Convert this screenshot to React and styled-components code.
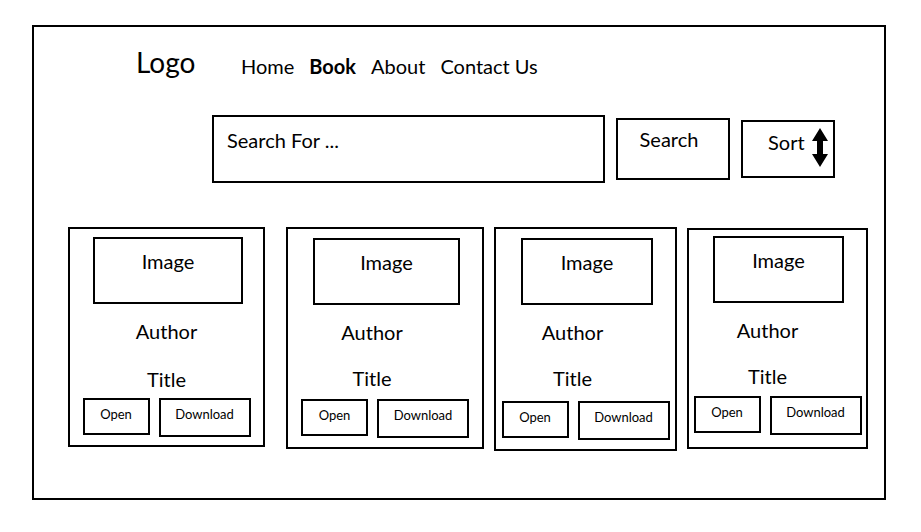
import React from "react";
import styled, { createGlobalStyle } from "styled-components";

const GlobalStyle = createGlobalStyle`
  body {
    margin: 0;
    background: #ffffff;
    color: #000000;
    font-family: "Lato", "Open Sans", sans-serif;
  }
`;

const Frame = styled.div`
  box-sizing: border-box;
  width: 854px;
  height: 475px;
  margin: 25px 0 0 32px;
  border: 2px solid #000;
  display: flex;
  flex-direction: column;
`;

const Header = styled.header`
  display: flex;
  align-items: flex-start;
  padding: 18px 0 0 102px;
`;

const Logo = styled.div`
  width: 105px;
  font-size: 28px;
  line-height: 34px;
`;

const Nav = styled.nav`
  display: flex;
  gap: 15px;
  margin-top: 9px;
`;

const NavLink = styled.a`
  font-size: 20px;
  line-height: 24px;
  color: #000;
  text-decoration: none;
  font-weight: ${(props) => (props.$active ? 700 : 400)};
  cursor: pointer;
`;

const SearchRow = styled.div`
  display: flex;
  align-items: center;
  gap: 11px;
  margin-top: 36px;
  padding-left: 178px;
`;

const SearchInput = styled.input`
  box-sizing: border-box;
  width: 393px;
  height: 68px;
  border: 2px solid #000;
  border-radius: 0;
  padding: 11px 13px 29px;
  font-family: inherit;
  font-size: 20px;
  line-height: 24px;
  color: #000;
  outline: none;

  &::placeholder {
    color: #000;
    opacity: 1;
  }
`;

const BoxButton = styled.button`
  box-sizing: border-box;
  background: #fff;
  border: 2px solid #000;
  border-radius: 0;
  color: #000;
  font-family: inherit;
  cursor: pointer;
`;

const SearchButton = styled(BoxButton)`
  width: 114px;
  height: 62px;
  padding: 7px 8px 0 0;
  font-size: 20px;
  line-height: 24px;
  display: flex;
  justify-content: center;
  align-items: flex-start;
`;

const SortButton = styled(BoxButton)`
  width: 94px;
  height: 58px;
  padding: 6px 0 0 25px;
  display: flex;
  align-items: flex-start;
  gap: 7px;
  font-size: 20px;
  line-height: 24px;
`;

const SortLabel = styled.span`
  margin-top: 2px;
`;

const CardRow = styled.div`
  display: flex;
  align-items: flex-start;
  gap: 10px;
  margin-top: 44px;
  padding-left: 34px;
`;

const Card = styled.div`
  box-sizing: border-box;
  width: ${(props) => props.$w}px;
  height: ${(props) => props.$h}px;
  margin-left: ${(props) => props.$ml || 0}px;
  margin-top: ${(props) => props.$mt || 0}px;
  border: 2px solid #000;
  display: flex;
  flex-direction: column;
`;

const ImageBox = styled.div`
  box-sizing: border-box;
  width: ${(props) => props.$w}px;
  height: 67px;
  margin: ${(props) => props.$mt}px 0 0 ${(props) => props.$ml}px;
  border: 2px solid #000;
  padding-top: 10px;
  text-align: center;
  font-size: 20px;
  line-height: 24px;
`;

const CardText = styled.div`
  margin-top: ${(props) => props.$mt}px;
  padding-right: ${(props) => -2 * props.$shift}px;
  text-align: center;
  font-size: 20px;
  line-height: 24px;
`;

const Actions = styled.div`
  display: flex;
  justify-content: center;
  align-items: flex-start;
  gap: 9px;
  margin-top: ${(props) => props.$mt}px;
`;

const SmallButton = styled(BoxButton)`
  width: ${(props) => props.$w}px;
  height: ${(props) => props.$h}px;
  padding: 6px 0 0;
  font-size: 13px;
  line-height: 16px;
  display: flex;
  justify-content: center;
  align-items: flex-start;
`;

const SortArrow = () => (
  <svg width="16" height="39" viewBox="0 0 16 39">
    <polygon
      points="8,0 16,13 11,13 11,26 16,26 8,39 0,26 5,26 5,13 0,13"
      fill="#000"
    />
  </svg>
);

// the wireframe cards are hand drawn, so each one is a little off
const books = [
  { id: 1, w: 197, h: 220, ml: 0, mt: 0, imgW: 150, imgMl: 23, imgMt: 8, shift: 0, titleMt: 24, btnMt: 7 },
  { id: 2, w: 198, h: 222, ml: 11, mt: 0, imgW: 147, imgMl: 25, imgMt: 9, shift: -13, titleMt: 22, btnMt: 9 },
  { id: 3, w: 183, h: 224, ml: 0, mt: 0, imgW: 132, imgMl: 25, imgMt: 9, shift: -13, titleMt: 22, btnMt: 11 },
  { id: 4, w: 181, h: 221, ml: 0, mt: 1, imgW: 131, imgMl: 24, imgMt: 6, shift: -10, titleMt: 22, btnMt: 8 },
];

const BookCard = ({ book }) => (
  <Card $w={book.w} $h={book.h} $ml={book.ml} $mt={book.mt}>
    <ImageBox $w={book.imgW} $ml={book.imgMl} $mt={book.imgMt}>
      Image
    </ImageBox>
    <CardText $mt={15} $shift={book.shift}>
      Author
    </CardText>
    <CardText $mt={book.titleMt} $shift={book.shift}>
      Title
    </CardText>
    <Actions $mt={book.btnMt}>
      <SmallButton $w={67} $h={37}>
        Open
      </SmallButton>
      <SmallButton $w={92} $h={39}>
        Download
      </SmallButton>
    </Actions>
  </Card>
);

export default function App() {
  return (
    <>
      <GlobalStyle />
      <Frame>
        <Header>
          <Logo>Logo</Logo>
          <Nav>
            <NavLink>Home</NavLink>
            <NavLink $active>Book</NavLink>
            <NavLink>About</NavLink>
            <NavLink>Contact Us</NavLink>
          </Nav>
        </Header>

        <SearchRow>
          <SearchInput placeholder="Search For ..." />
          <SearchButton>Search</SearchButton>
          <SortButton>
            <SortLabel>Sort</SortLabel>
            <SortArrow />
          </SortButton>
        </SearchRow>

        <CardRow>
          {books.map((book) => (
            <BookCard key={book.id} book={book} />
          ))}
        </CardRow>
      </Frame>
    </>
  );
}
